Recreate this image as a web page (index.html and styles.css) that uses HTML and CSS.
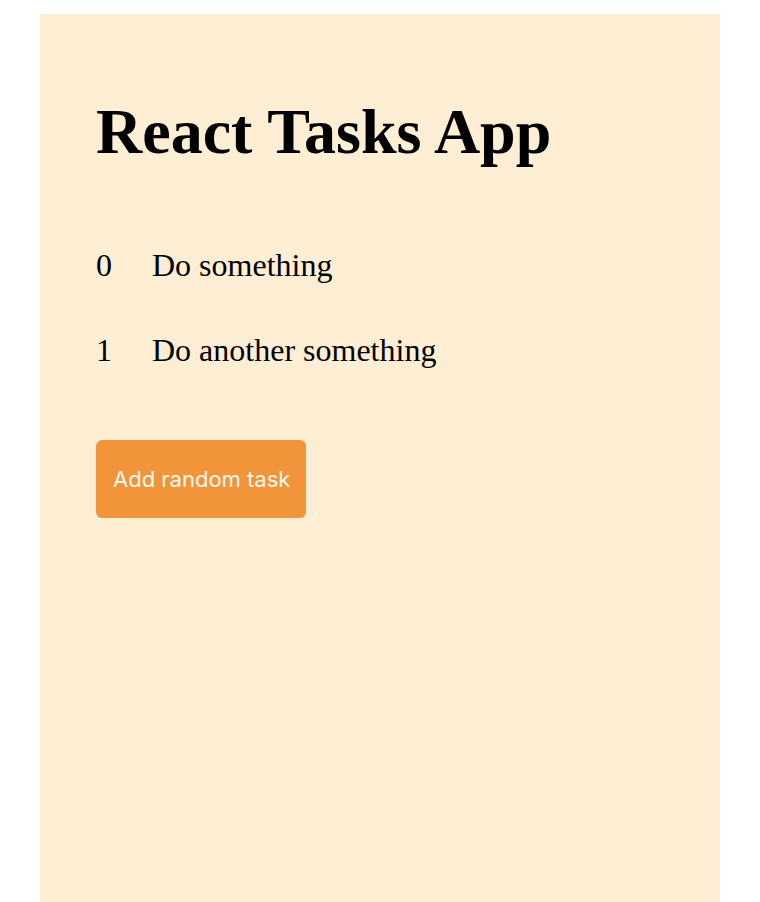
FILE: index.html
```html
<!DOCTYPE html>
<html>
<head>
<meta charset="utf-8">
<link rel="stylesheet" href="styles.css">
</head>
<body>
<div class="panel">
  <h1 class="title">React Tasks App</h1>
  <ul class="tasks">
    <li class="task"><span class="task-id">0</span><span class="task-name">Do something</span></li>
    <li class="task"><span class="task-id">1</span><span class="task-name">Do another something</span></li>
  </ul>
  <button class="add-btn">Add random task</button>
</div>
</body>
</html>
```

FILE: styles.css
```css
html, body {
  margin: 0;
  padding: 0;
  background: #ffffff;
}
body {
  font-family: "Liberation Serif", "Times New Roman", serif;
  color: #000;
}
.panel {
  margin: 14px 40px 0;
  min-height: 888px;
  background: #fdeed4;
  padding: 38px 56px 0;
  box-sizing: border-box;
  display: flex;
  flex-direction: column;
  align-items: flex-start;
}
.title {
  font-size: 64px;
  font-weight: bold;
  margin: 43px 0 0;
  line-height: normal;
}
.tasks {
  list-style: none;
  margin: 78px 0 0;
  padding: 0;
  display: flex;
  flex-direction: column;
  gap: 48px;
}
.task {
  display: flex;
  font-size: 32px;
  line-height: normal;
}
.task-id {
  width: 56px;
}
.add-btn {
  margin-top: 71px;
  background: #f2953a;
  color: #fff8ee;
  border: none;
  border-radius: 6px;
  font-family: Inter, "Noto Sans", sans-serif;
  font-size: 22px;
  padding: 0 16px 0 17px;
  height: 78px;
}
```
